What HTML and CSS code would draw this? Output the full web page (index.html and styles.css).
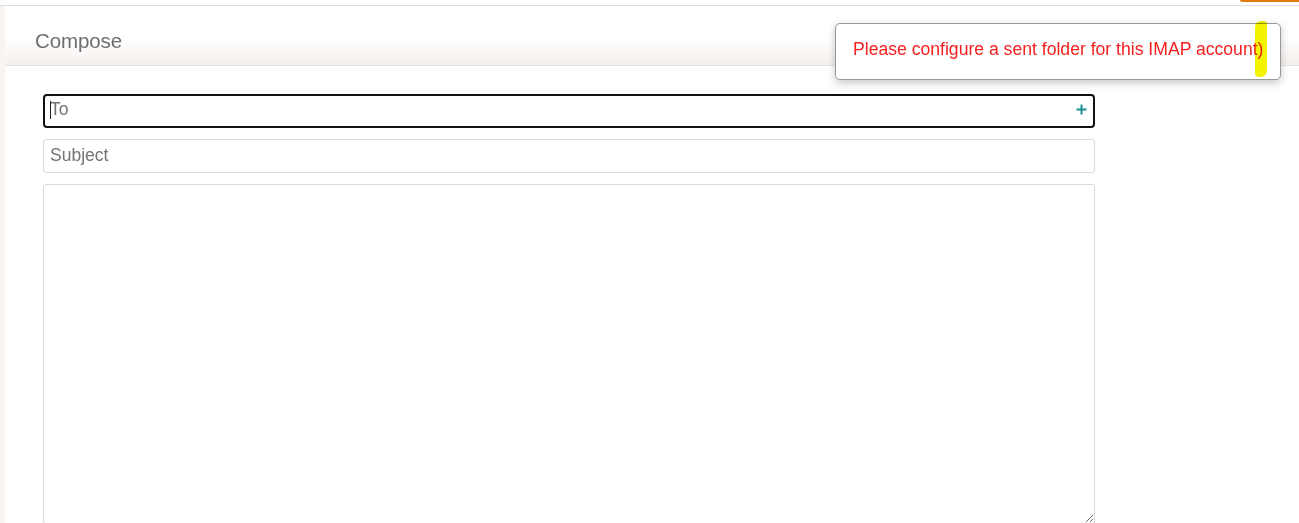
FILE: index.html
```html
<!DOCTYPE html>
<html lang="en">
<head>
    <meta charset="UTF-8" />
    <meta name="viewport" content="width=device-width, initial-scale=1" />
    <title>Compose</title>
    <link rel="stylesheet" href="styles.css">
</head>
<body>

    <div class="topbar">
        <span class="topbar-tab"></span>
    </div>

    <div class="layout">
        <div class="side-strip"></div>

        <main class="main">
            <div class="panel-head">
                <h2>Compose</h2>
            </div>

            <form class="compose-form">
                <div class="field field-to">
                    <span class="caret"></span>
                    <input type="text" class="input input-focus" placeholder="To" />
                    <svg class="add-icon" width="11" height="11" viewBox="0 0 11 11">
                        <path d="M5.5 0.5v10M0.5 5.5h10" stroke="#1b8f93" stroke-width="2" fill="none" />
                    </svg>
                </div>

                <div class="field">
                    <input type="text" class="input" placeholder="Subject" />
                </div>

                <textarea class="body-text"></textarea>
            </form>
        </main>
    </div>

    <div class="toast">
        Please configure a sent folder for this IMAP account)
        <span class="marker"></span>
    </div>

</body>
</html>
```

FILE: styles.css
```css
body {
    margin: 0;
    font-family: 'Liberation Sans', Arial, sans-serif;
    background-color: #fff;
    overflow: hidden;
}

.topbar {
    height: 5px;
    border-bottom: 1px solid #dcdcdc;
    display: flex;
    justify-content: flex-end;
}

.topbar-tab {
    width: 59px;
    height: 2px;
    background-color: #e47a0c;
    border-bottom-left-radius: 3px;
}

.layout {
    display: flex;
    height: 517px;
}

.side-strip {
    width: 5px;
    background-color: #f8f4f2;
}

.main {
    flex: 1;
}

.panel-head {
    box-sizing: border-box;
    height: 60px;
    padding: 10px 0 0 30px;
    background: linear-gradient(to bottom, #fff 0%, #fff 55%, #f5f0ed 100%);
    border-bottom: 1px solid #e8e2de;
    display: flex;
    align-items: center;
}

.panel-head h2 {
    margin: 0;
    font-size: 20.5px;
    font-weight: normal;
    color: #6b6e72;
    letter-spacing: -0.1px;
}

.compose-form {
    width: 1052px;
    margin: 28px 0 0 38px;
    display: flex;
    flex-direction: column;
    gap: 11px;
}

.field {
    position: relative;
}

.input {
    box-sizing: border-box;
    width: 100%;
    height: 34px;
    padding: 0 6px 2px;
    border: 1px solid #dadada;
    border-radius: 3px;
    font-family: inherit;
    font-size: 17.5px;
    color: #333;
    outline: none;
}

.input::placeholder {
    color: #737373;
}

.input-focus {
    border: 2px solid #111;
    border-radius: 4px;
    padding: 0 5px 3px;
}

.caret {
    position: absolute;
    left: 7px;
    top: 7px;
    width: 1px;
    height: 18px;
    background-color: #222;
}

.add-icon {
    position: absolute;
    right: 8px;
    top: 10px;
}

.body-text {
    box-sizing: border-box;
    width: 100%;
    height: 340px;
    border: 1px solid #dadada;
    border-radius: 3px;
    font-family: inherit;
    font-size: 16px;
    padding: 6px;
    resize: vertical;
}

.toast {
    position: absolute;
    top: 23px;
    left: 835px;
    box-sizing: border-box;
    width: 446px;
    height: 57px;
    padding: 0 17px 4px;
    display: flex;
    align-items: center;
    background-color: #fff;
    border: 1px solid #999;
    border-radius: 5px;
    box-shadow: 0 3px 8px rgba(0, 0, 0, 0.22);
    color: #f51f1f;
    font-size: 17.6px;
    white-space: nowrap;
}

.marker {
    position: absolute;
    left: 419px;
    top: -3px;
    width: 12px;
    height: 56px;
    background-color: #f4f400;
    border-radius: 6px 3px 6px 4px;
    mix-blend-mode: multiply;
}
```
